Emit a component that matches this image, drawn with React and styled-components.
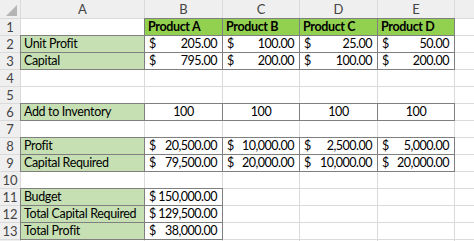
import React from "react";
import styled, { createGlobalStyle, css } from "styled-components";

const Global = createGlobalStyle`
  html, body { margin: 0; padding: 0; background: #ffffff; }
  body { font-family: "Lato", "Open Sans", sans-serif; }
  #root { width: 474px; height: 241px; overflow: hidden; }
`;

const Sheet = styled.div`
  display: grid;
  grid-template-columns: 20px 123px 77px 76px 77px 76px 40px;
  grid-auto-rows: 16px;
  grid-template-rows: 18px;
  gap: 1px;
  background: #dadada;
  width: 520px;
  font-size: 12.5px;
  letter-spacing: -0.35px;
  color: #000;
`;

const HeaderBase = styled.div`
  background: #efefef;
  color: #444;
  display: flex;
  align-items: center;
  justify-content: center;
  font-size: 13px;
  letter-spacing: 0;
  line-height: 1;
`;

const Corner = styled(HeaderBase)`
  align-items: flex-end;
  justify-content: flex-end;
  padding: 0 3px 2px 0;
`;

const ColHeader = styled(HeaderBase)``;

const RowHeader = styled(HeaderBase)``;

const fills = {
  product: "#92d050",
  label: "#c6e0b4",
};

const Cell = styled.div`
  background: ${(p) => (p.$fill ? fills[p.$fill] : "#ffffff")};
  display: flex;
  align-items: center;
  justify-content: ${(p) =>
    p.$align === "center" ? "center" : p.$align === "right" ? "flex-end" : "flex-start"};
  padding: 0 3px;
  font-weight: ${(p) => (p.$bold ? 700 : 400)};
  white-space: nowrap;
  overflow: visible;
  line-height: 1;
  ${(p) =>
    p.$bordered &&
    css`
      outline: 1px solid #7f7f7f;
      position: relative;
      z-index: 1;
    `}
`;

const Money = styled(Cell)`
  justify-content: space-between;
  padding: 0 5px 0 4px;
  letter-spacing: -0.5px;
`;

const Dollar = styled.span``;
const Amount = styled.span``;

const CornerTriangle = () => (
  <svg width="11" height="11" viewBox="0 0 11 11">
    <polygon points="11,0 11,11 0,11" fill="#b5b5b5" />
  </svg>
);

const cols = ["A", "B", "C", "D", "E", ""];

const empty = () => ({ type: "empty" });
const label = (t) => ({ type: "text", text: t, fill: "label", bordered: true });
const money = (v) => ({ type: "money", value: v, bordered: true });
const product = (t) => ({ type: "text", text: t, fill: "product", bold: true, bordered: true });
const center = (t) => ({ type: "text", text: t, align: "center", bordered: true });

const rows = [
  [empty(), product("Product A"), product("Product B"), product("Product C"), product("Product D"), empty()],
  [label("Unit Profit"), money("205.00"), money("100.00"), money("25.00"), money("50.00"), empty()],
  [label("Capital"), money("795.00"), money("200.00"), money("100.00"), money("200.00"), empty()],
  [empty(), empty(), empty(), empty(), empty(), empty()],
  [empty(), empty(), empty(), empty(), empty(), empty()],
  [label("Add to Inventory"), center("100"), center("100"), center("100"), center("100"), empty()],
  [empty(), empty(), empty(), empty(), empty(), empty()],
  [label("Profit"), money("20,500.00"), money("10,000.00"), money("2,500.00"), money("5,000.00"), empty()],
  [label("Capital Required"), money("79,500.00"), money("20,000.00"), money("10,000.00"), money("20,000.00"), empty()],
  [empty(), empty(), empty(), empty(), empty(), empty()],
  [label("Budget"), money("150,000.00"), empty(), empty(), empty(), empty()],
  [label("Total Capital Required"), money("129,500.00"), empty(), empty(), empty(), empty()],
  [label("Total Profit"), money("38,000.00"), empty(), empty(), empty(), empty()],
  [empty(), empty(), empty(), empty(), empty(), empty()],
];

function renderCell(c, key) {
  if (c.type === "money") {
    return (
      <Money key={key} $bordered={c.bordered}>
        <Dollar>$</Dollar>
        <Amount>{c.value}</Amount>
      </Money>
    );
  }
  if (c.type === "text") {
    return (
      <Cell key={key} $fill={c.fill} $bold={c.bold} $align={c.align} $bordered={c.bordered}>
        {c.text}
      </Cell>
    );
  }
  return <Cell key={key} />;
}

export default function App() {
  return (
    <>
      <Global />
      <Sheet>
        <Corner>
          <CornerTriangle />
        </Corner>
        {cols.map((c, i) => (
          <ColHeader key={"h" + i}>{c}</ColHeader>
        ))}
        {rows.map((r, ri) => (
          <React.Fragment key={ri}>
            <RowHeader>{ri + 1}</RowHeader>
            {r.map((c, ci) => renderCell(c, ri + "-" + ci))}
          </React.Fragment>
        ))}
      </Sheet>
    </>
  );
}
